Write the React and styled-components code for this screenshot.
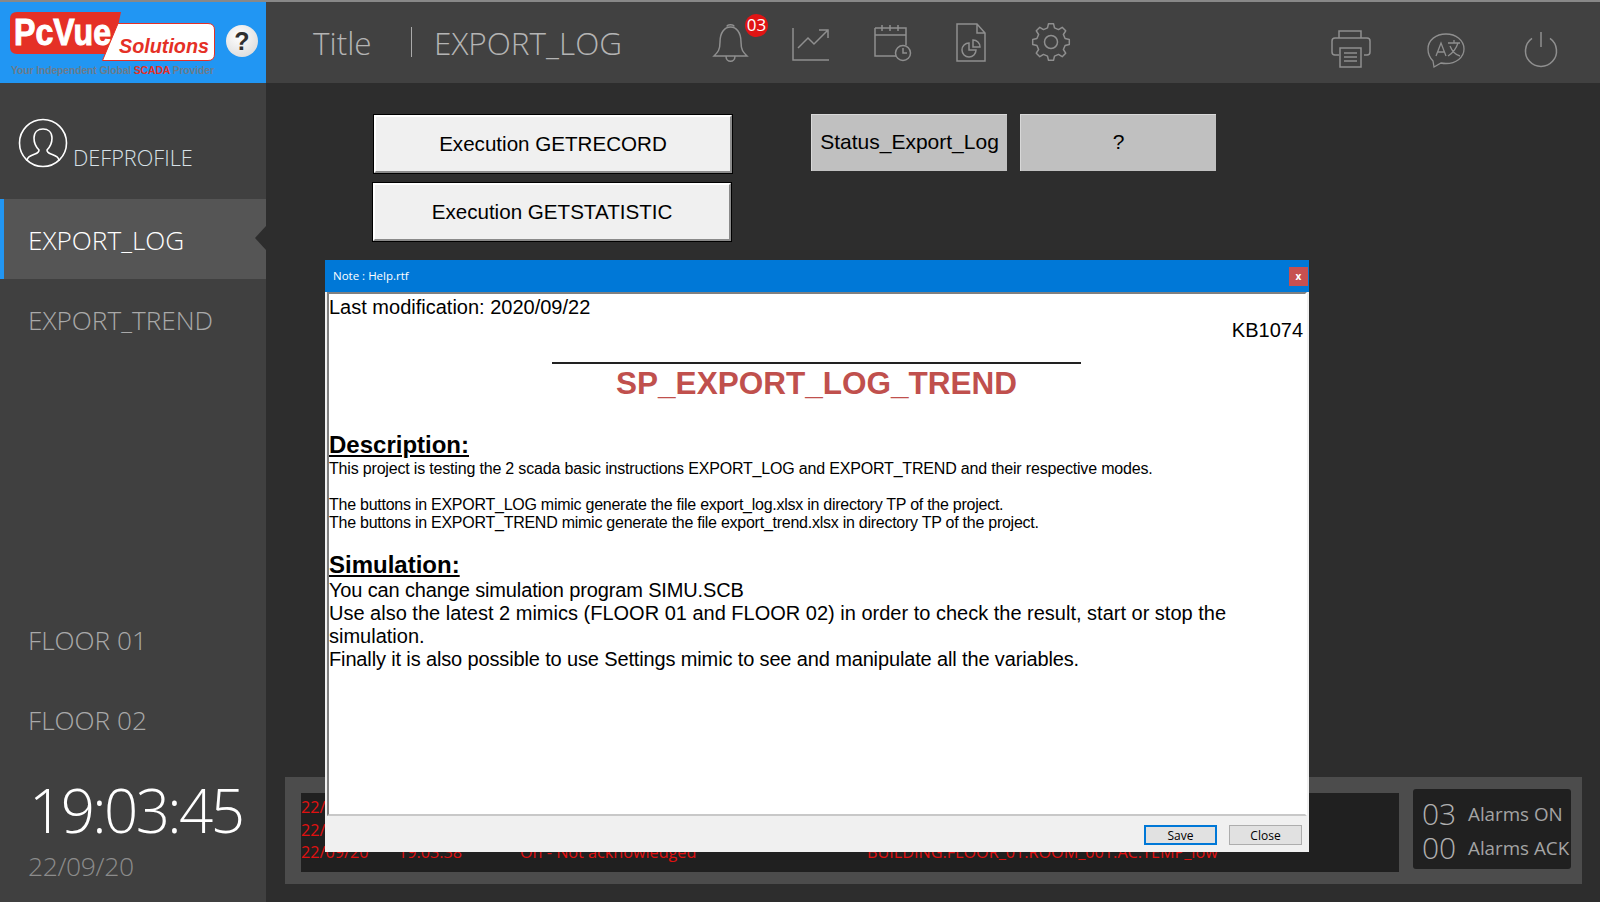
import React from 'react';
import styled, { createGlobalStyle } from 'styled-components';

const Global = createGlobalStyle`
  html, body { margin: 0; padding: 0; background: #2d2d2d; }
  * { box-sizing: border-box; }
`;
const UI = `"Open Sans", "Noto Sans", sans-serif`;
const ARIAL = `"Liberation Sans", Arial, sans-serif`;

const Page = styled.div`
  position: relative; width: 1600px; height: 902px; overflow: hidden; background: #2d2d2d;
  display: grid; grid-template-columns: 266px 1fr; grid-template-rows: 83px 1fr;
  font-family: ${UI};
`;
const LogoCell = styled.div`
  background: #2196f3; border-top: 2px solid #888; padding: 10px 0 0 10px; display: flex; align-items: flex-start; gap: 10px;
`;
const LogoSvg = styled.svg`display: block; flex: none;`;
const HelpDot = styled.div`
  width: 32px; height: 32px; border-radius: 50%; margin-top: 13px; background: radial-gradient(circle at 40% 35%, #fff, #d4d4d4);
  color: #2f2f2f; font: 700 25px/32px ${ARIAL}; text-align: center;
`;
const TopBar = styled.div`
  background: #414141; border-top: 2px solid #888; display: flex; align-items: flex-start; position: relative; color: #a8a8a8; padding-right: 42px;
`;
const TitleText = styled.div`
  font-family: ${UI}; font-weight: 300; font-size: 31.5px; line-height: 40px; margin-top: 21px; color: #b4b4b4;
`;
const TitleCell = styled(TitleText)`margin-left: 47px; width: 98px;`;
const Pipe = styled.div`width: 1px; height: 30px; margin-top: 25px; background: #aaa;`;
const MimicCell = styled(TitleText)`margin-left: 22px; width: 278px;`;
const IconGroup = styled.div`display: flex; align-items: flex-start; margin-top: ${p => p.$top}px;`;
const IconBox = styled.div`position: relative; width: ${p => p.$w}px; height: 42px; flex: none; padding-top: ${p => p.$pad || 0}px;`;
const Badge = styled.div`
  position: absolute; left: 33px; top: -8px; width: 23px; height: 23px; border-radius: 50%; background: #e01414;
  color: #fff; font: 400 17px/22px ${UI}; text-align: center;
`;
const Spacer = styled.div`flex: 1;`;
const Sidebar = styled.div`background: #404040; display: flex; flex-direction: column; color: #aaa;`;
const Profile = styled.div`display: flex; height: 116px; padding: 35px 0 0 18px; align-items: flex-start;`;
const ProfileName = styled.div`font-weight: 300; font-size: 21.7px; line-height: 28px; color: #d8e2e8; margin: 26px 0 0 5px;`;
const Row = styled.div`
  height: 80px; display: flex; align-items: center; padding: 2px 0 0 ${p => p.$active ? 24 : 28}px; font-size: 26.2px; font-weight: 300; position: relative;
  color: ${p => p.$active ? '#fff' : '#a9a9a9'}; background: ${p => p.$active ? '#555' : 'transparent'};
  border-left: ${p => p.$active ? '4px solid #2196f3' : '0'};
`;
const Notch = styled.span`
  position: absolute; right: 0; top: 27px; width: 0; height: 0; border-style: solid; border-width: 12.5px 11px 12.5px 0;
  border-color: transparent #2d2d2d transparent transparent;
`;
const Gap = styled.div`height: 240px;`;
const Clock = styled.div`font-size: 60px; letter-spacing: -2.6px; font-weight: 300; line-height: 70px; color: #fff; padding-left: 29px; margin-top: 16px; white-space: nowrap;`;
const DateText = styled.div`font-size: 26.5px; letter-spacing: -0.4px; font-weight: 300; line-height: 34px; color: #8c8c8c; padding-left: 28px; margin-top: 4px;`;
const Main = styled.div`display: flex; flex-direction: column; position: relative;`;
const Controls = styled.div`display: flex; height: 694px; padding: 31px 0 0 106px; gap: 78px;`;
const ExecCol = styled.div`display: flex; flex-direction: column; gap: 10px; width: 361px; padding-top: 1px;`;
const ExecButton = styled.button`
  width: 358px; height: 58px; margin-left: ${p => p.$shift}px; background: #f0f0f0; border: 2px solid #fff; border-right-color: #8a8a8a; border-bottom-color: #8a8a8a;
  outline: 1px solid #000; outline-offset: 0;
  font: 400 20.6px ${ARIAL}; color: #000; padding: 0;
`;
const StatusRow = styled.div`display: flex; gap: 13px;`;
const StatusCell = styled.div`
  width: 196px; height: 57px; background: #c0c0c0; color: #000; font: 400 21px/53px ${ARIAL}; text-align: center;
  border-top: 1px solid #d8d8d8; border-left: 1px solid #d8d8d8;
`;
const AlarmPanel = styled.div`
  margin: 0 18px 18px 19px; height: 107px; background: #4c4c4c; display: flex; padding: 12px 11px 15px 16px; gap: 14px;
`;
const LogBox = styled.div`flex: 1; background: #202020; margin: 4px 0 -3px; padding: 3px 0 0 0; color: #e01010; font-size: 16.2px; line-height: 22.5px;`;
const LogRow = styled.div`display: grid; grid-template-columns: 97px 122px 347px 1fr; white-space: nowrap;`;
const Counts = styled.div`width: 158px; background: #202020; border-radius: 3px; padding: 8px 0 0 9px; display: grid; grid-template-columns: 46px 1fr; grid-auto-rows: 34px; align-items: center; color: #a4a4a4; overflow: hidden;`;
const CountNum = styled.div`font-size: 30px; line-height: 34px; font-weight: 300; color: #b0b0b0;`;
const CountLabel = styled.div`font-size: 18.8px; line-height: 30px; white-space: nowrap;`;
const Dialog = styled.div`
  position: absolute; left: 325px; top: 260px; width: 984px; height: 592px; background: #f0f0f0; display: flex; flex-direction: column; z-index: 5;
`;
const DialogTitle = styled.div`
  height: 32px; background: #0078d7; color: #fff; display: flex; align-items: center; justify-content: space-between; padding: 0 1px 2px 8px;
  font: 400 11.5px ${UI};
`;
const CloseX = styled.div`width: 19px; height: 19px; margin-top: 2px; background: #c75050; color: #fff; font: 700 10px/18px ${UI}; text-align: center;`;
const Body = styled.div`
  height: 524px; margin: 0 2px; background: #fff; border: 2px solid; border-color: #808080 #fff #c8c8c8 #808080;
  color: #000; font-family: ${ARIAL}; padding: 2px 2px 0 0;
`;
const Line20 = styled.div`font-size: 20px; line-height: 23px; letter-spacing: ${p => p.$s || 0}px; white-space: ${p => p.$wrap ? 'normal' : 'nowrap'}; text-align: ${p => p.$right ? 'right' : 'left'};`;
const DocTitle = styled.div`
  width: 529px; margin: 20px 0 0 223px; border-top: 2px solid #222; color: #c0504d; font: 700 31.5px/38px ${ARIAL}; text-align: center;
`;
const Heading = styled.h2`margin: ${p => p.$mt}px 0 0; font: 700 24px/27px ${ARIAL}; text-decoration: underline; color: #000;`;
const Small = styled.div`font-size: 16px; line-height: 18px; white-space: nowrap; margin-top: ${p => p.$mt || 0}px; letter-spacing: ${p => p.$s}px;`;
const SimLines = styled.div`margin-top: 1px;`;
const Footer = styled.div`flex: 1; display: flex; justify-content: flex-end; align-items: flex-start; gap: 12px; padding: 9px 7px 0 0;`;
const DlgButton = styled.button`
  width: 73px; height: 20px; padding: 0; background: #e1e1e1; color: #000; font: 400 12px ${UI};
  border: ${p => p.$focus ? '2px solid #0078d7' : '1px solid #adadad'};
`;
const Stroke = styled.svg`fill: none; stroke: ${p => p.$c || '#8f8f8f'}; stroke-width: ${p => p.$sw || 1.5}; display: block;`;

const Gear = () => {
  const pts = [];
  const n = 8;
  for (let i = 0; i < n; i++) {
    const a = (i / n) * Math.PI * 2 - Math.PI / 2;
    const w = Math.PI / n;
    const f = (r, t) => `${(20 + r * Math.cos(t)).toFixed(1)} ${(20 + r * Math.sin(t)).toFixed(1)}`;
    pts.push(`${i ? 'L' : 'M'}${f(14.5, a - w * 0.62)} L${f(18.5, a - w * 0.34)} L${f(18.5, a + w * 0.34)} L${f(14.5, a + w * 0.62)}`);
  }
  return <Stroke width="40" height="40" viewBox="0 0 40 40"><path d={pts.join(' ') + ' Z'} strokeLinejoin="round" /><circle cx="20" cy="20" r="6.5" /></Stroke>;
};

const Logo = () => (
  <LogoSvg width="206" height="66" viewBox="0 0 206 66">
    <path d="M7 0H111L102 42H7Q0 42 0 35V7Q0 0 7 0z" fill="#e53026" />
    <path d="M108 11.500H198Q204.500 11.500 204.500 18V42Q204.500 48.500 198 48.500H92.500z" fill="#fff" stroke="#e53026" />
    <text x="4" y="33" fontFamily="Liberation Sans" fontWeight="700" fontSize="36" fill="#fff" stroke="#fff" strokeWidth="1" textLength="97" lengthAdjust="spacingAndGlyphs">PcVue</text>
    <text x="109" y="41" fontFamily="Liberation Sans" fontWeight="700" fontStyle="italic" fontSize="20.500" fill="#e53026" textLength="90" lengthAdjust="spacingAndGlyphs">Solutions</text>
    <text x="1" y="62" fontFamily="Liberation Sans" fontWeight="700" fontSize="10.500" fill="#6b7c8c" textLength="203" lengthAdjust="spacing">Your Independent Global <tspan fill="#e53026">SCADA</tspan> Provider</text>
  </LogoSvg>
);

const rows = [0, 1, 2];

export default function App() {
  return (
    <Page>
      <Global />
      <LogoCell>
        <Logo />
        <HelpDot>?</HelpDot>
      </LogoCell>
      <TopBar>
        <TitleCell>Title</TitleCell>
        <Pipe />
        <MimicCell>EXPORT_LOG</MimicCell>
        <IconGroup $top={20}>
          <IconBox $w={80}>
            <Stroke width="38" height="42" viewBox="0 0 38 42"><path d="M2 34c4-4 6-6 6-14C8 10 13 5 18.500 5S29 10 29 20c0 8 2 10 6 14H2zM15 4.500C15 2 22 2 22 4.500M14 34c0 7 9 7 9 0" /></Stroke>
            <Badge>03</Badge>
          </IconBox>
          <IconBox $w={82}>
            <Stroke width="38" height="40" viewBox="0 0 38 40"><path d="M1 6v32h36M6 26l10-10 6 6 13-13M27 8h9v8" /></Stroke>
          </IconBox>
          <IconBox $w={82}>
            <Stroke width="38" height="40" viewBox="0 0 38 40"><path d="M1 6h31v17M1 6v28h21M1 13h31M8 3v6M16 3v6M24 3v6" /><circle cx="29" cy="31" r="7.500" /><path d="M29 26v5h4" /></Stroke>
          </IconBox>
          <IconBox $w={75}>
            <Stroke width="30" height="40" viewBox="0 0 30 40"><path d="M1 2h20l8 9v28H1zM21 2v9h8" /><path d="M13 21a7 7 0 1 0 7 7h-7z" /><path d="M17 18a7 7 0 0 1 7 7h-7z" /></Stroke>
          </IconBox>
          <IconBox $w={40}><Gear /></IconBox>
        </IconGroup>
        <Spacer />
        <IconGroup $top={26}>
          <IconBox $w={96}>
            <Stroke width="40" height="42" viewBox="0 0 40 42"><path d="M8 10V3h22v7M8 27H4q-3 0-3-3V13q0-3 3-3h32q3 0 3 3v11q0 3-3 3h-3" /><path d="M9 20h21v19H9zM13 25h13M13 29h13M13 33h13" /></Stroke>
          </IconBox>
          <IconBox $w={97} $pad={2}>
            <Stroke width="38" height="40" viewBox="0 0 38 40" $sw={1.3}><path d="M19 4C9 4 1 10 1 19c0 6 3 10 5 12l1 6 7-4c2 .5 3 .5 5 .5 10 0 18-6 18-14.500S29 4 19 4z" /><path d="M9 26l5-13 5 13M11 22h6M21 13h12M27 10v3M31 13c-2 6-5 10-10 13M23 16c2 5 6 9 10 10" /></Stroke>
          </IconBox>
          <IconBox $w={34}>
            <Stroke width="34" height="40" viewBox="0 0 34 40"><path d="M17 4v15M8 10.400A15.500 15.500 0 1 0 26 10.400" /></Stroke>
          </IconBox>
        </IconGroup>
      </TopBar>
      <Sidebar>
        <Profile>
          <Stroke width="50" height="50" viewBox="0 0 50 50" $c="#fff" $sw={1.6}>
            <circle cx="25" cy="25" r="23.500" />
            <path d="M9 43c0-4 3-5 8-7 3-1 4-2 4-4-3-3-5-7-5-12 0-6 4-9 9-9s9 3 9 9c0 5-2 9-5 12 0 2 1 3 4 4 5 2 8 3 8 7" />
          </Stroke>
          <ProfileName>DEFPROFILE</ProfileName>
        </Profile>
        <Row $active>EXPORT_LOG<Notch /></Row>
        <Row>EXPORT_TREND</Row>
        <Gap />
        <Row>FLOOR 01</Row>
        <Row>FLOOR 02</Row>
        <Clock>19:03:45</Clock>
        <DateText>22/09/20</DateText>
      </Sidebar>
      <Main>
        <Controls>
          <ExecCol>
            <ExecButton $shift={2}>Execution GETRECORD</ExecButton>
            <ExecButton $shift={1}>Execution GETSTATISTIC</ExecButton>
          </ExecCol>
          <StatusRow>
            <StatusCell>Status_Export_Log</StatusCell>
            <StatusCell>?</StatusCell>
          </StatusRow>
        </Controls>
        <AlarmPanel>
          <LogBox>
            {rows.map(i => (
              <LogRow key={i}>
                <span>22/09/20</span><span>19:03:38</span><span>On - Not acknowledged</span><span>BUILDING.FLOOR_01.ROOM_001.AC.TEMP_low</span>
              </LogRow>
            ))}
          </LogBox>
          <Counts>
            <CountNum>03</CountNum><CountLabel>Alarms ON</CountLabel>
            <CountNum>00</CountNum><CountLabel>Alarms ACK</CountLabel>
          </Counts>
        </AlarmPanel>
      </Main>
      <Dialog>
        <DialogTitle>Note : Help.rtf<CloseX>x</CloseX></DialogTitle>
        <Body>
          <Line20>Last modification: 2020/09/22</Line20>
          <Line20 $right>KB1074</Line20>
          <DocTitle>SP_EXPORT_LOG_TREND</DocTitle>
          <Heading $mt={29}>Description:</Heading>
          <Small $mt={2} $s={-0.18}>This project is testing the 2 scada basic instructions EXPORT_LOG and EXPORT_TREND and their respective modes.</Small>
          <Small $mt={18} $s={-0.255}>The buttons in EXPORT_LOG mimic generate the file export_log.xlsx in directory TP of the project.</Small>
          <Small $s={-0.255}>The buttons in EXPORT_TREND mimic generate the file export_trend.xlsx in directory TP of the project.</Small>
          <Heading $mt={19}>Simulation:</Heading>
          <SimLines>
            <Line20 $s={-0.14}>You can change simulation program SIMU.SCB</Line20>
            <Line20 $wrap>Use also the latest 2 mimics (FLOOR 01 and FLOOR 02) in order to check the result, start or stop the simulation.</Line20>
            <Line20 $s={-0.14}>Finally it is also possible to use Settings mimic to see and manipulate all the variables.</Line20>
          </SimLines>
        </Body>
        <Footer>
          <DlgButton $focus>Save</DlgButton>
          <DlgButton>Close</DlgButton>
        </Footer>
      </Dialog>
    </Page>
  );
}
